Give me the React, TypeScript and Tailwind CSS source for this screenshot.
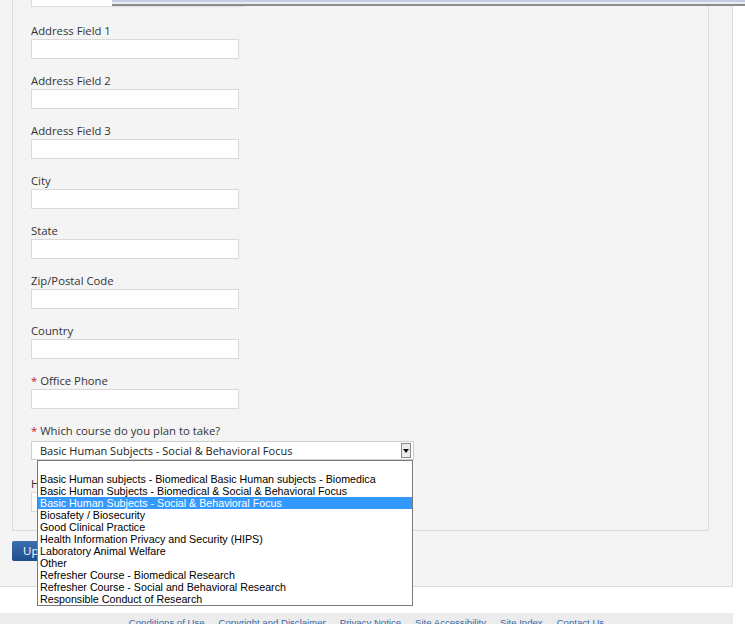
import React from 'react';

const fields = [
  { label: 'Address Field 1' },
  { label: 'Address Field 2' },
  { label: 'Address Field 3' },
  { label: 'City' },
  { label: 'State' },
  { label: 'Zip/Postal Code' },
  { label: 'Country' },
  { label: 'Office Phone', required: true },
];

const courses = [
  '',
  'Basic Human subjects - Biomedical Basic Human subjects - Biomedica',
  'Basic Human Subjects - Biomedical & Social & Behavioral Focus',
  'Basic Human Subjects - Social & Behavioral Focus',
  'Biosafety / Biosecurity',
  'Good Clinical Practice',
  'Health Information Privacy and Security (HIPS)',
  'Laboratory Animal Welfare',
  'Other',
  'Refresher Course - Biomedical Research',
  'Refresher Course - Social and Behavioral Research',
  'Responsible Conduct of Research',
];

const footerLinks = [
  'Conditions of Use',
  'Copyright and Disclaimer',
  'Privacy Notice',
  'Site Accessibility',
  'Site Index',
  'Contact Us',
];

function Label({ text, required }: { text: string; required?: boolean }) {
  return (
    <div className="h-[16px] text-[11.3px] leading-[16px] text-[#333]">
      {required && <span className="text-[#c0262d]">* </span>}
      {text}
    </div>
  );
}

export default function App() {
  return (
    <div className="relative w-[745px] h-[624px] overflow-hidden bg-white font-['Open_Sans',sans-serif]">
      {/* outer panel */}
      <div className="w-[733px] bg-[#f4f4f4] border-r border-b border-[#dcdcdc] pb-[25px]">
        <div className="ml-[12px] w-[697px] border-l border-r border-b border-[#dcdcdc] pl-[18px] pb-[18px]">
          <div className="w-[214px] h-[7px] border border-t-0 border-[#dcdcdc] bg-white" />
          <div className="mt-[16px]">
            {fields.map((f) => (
              <div key={f.label} className="mb-[14px]">
                <Label text={f.label} required={f.required} />
                <div className="w-[208px] h-[20px] border border-[#d9d9d9] bg-white" />
              </div>
            ))}
            <div>
              <Label text="Which course do you plan to take?" required />
              <div className="mt-[2px] w-[383px] h-[19px] border border-[#cfcfcf] bg-white flex items-center justify-between pl-[8px] pr-[2px]">
                <span className="text-[11px] text-[#222] leading-none">Basic Human Subjects - Social &amp; Behavioral Focus</span>
                <div className="w-[10px] h-[15px] border border-[#8a8a8a] bg-[#ececec] flex items-center justify-center">
                  <svg width="6" height="4" viewBox="0 0 6 4">
                    <path d="M0 0h6L3 4z" fill="#111" />
                  </svg>
                </div>
              </div>
            </div>
            <div className="mt-[16px]">
              <Label text="How did you hear about us?" />
              <div className="w-[208px] h-[20px] border border-[#d9d9d9] bg-white" />
            </div>
          </div>
        </div>
        <button className="mt-[10px] ml-[12px] h-[20px] pl-[11px] pr-[11px] bg-gradient-to-b from-[#3c6fb0] to-[#1f4c8c] text-white text-[11.5px] leading-[20px] rounded-[2px]">
          Update Profile
        </button>
      </div>

      {/* footer */}
      <div className="mt-[26px] w-[733px] h-[20px] bg-[#ececec] pt-[3px] flex justify-center gap-[14px] font-['Liberation_Sans',Arial,sans-serif] text-[9.6px] leading-[14px] text-[#3a67a5]">
        {footerLinks.map((l) => (
          <span key={l}>{l}</span>
        ))}
      </div>

      {/* window edge strip */}
      <div className="absolute left-[112px] top-0 w-[633px] h-[6px] bg-[#e9edf3] border-t-[2px] border-t-[#c3cde0] border-b-[2px] border-b-[#8c8c8c]" />

      {/* open select list */}
      <div className="absolute left-[37px] top-[460px] w-[376px] h-[146px] border border-[#7a7a7a] bg-white font-['Liberation_Sans',Arial,sans-serif] text-[10.7px] text-black">
        {courses.map((c, i) => (
          <div
            key={i}
            className={
              'h-[12px] leading-[12px] pl-[2px] whitespace-nowrap overflow-hidden ' +
              (i === 3 ? 'bg-[#3399ff] text-white' : '')
            }
          >
            {c}
          </div>
        ))}
      </div>
    </div>
  );
}
